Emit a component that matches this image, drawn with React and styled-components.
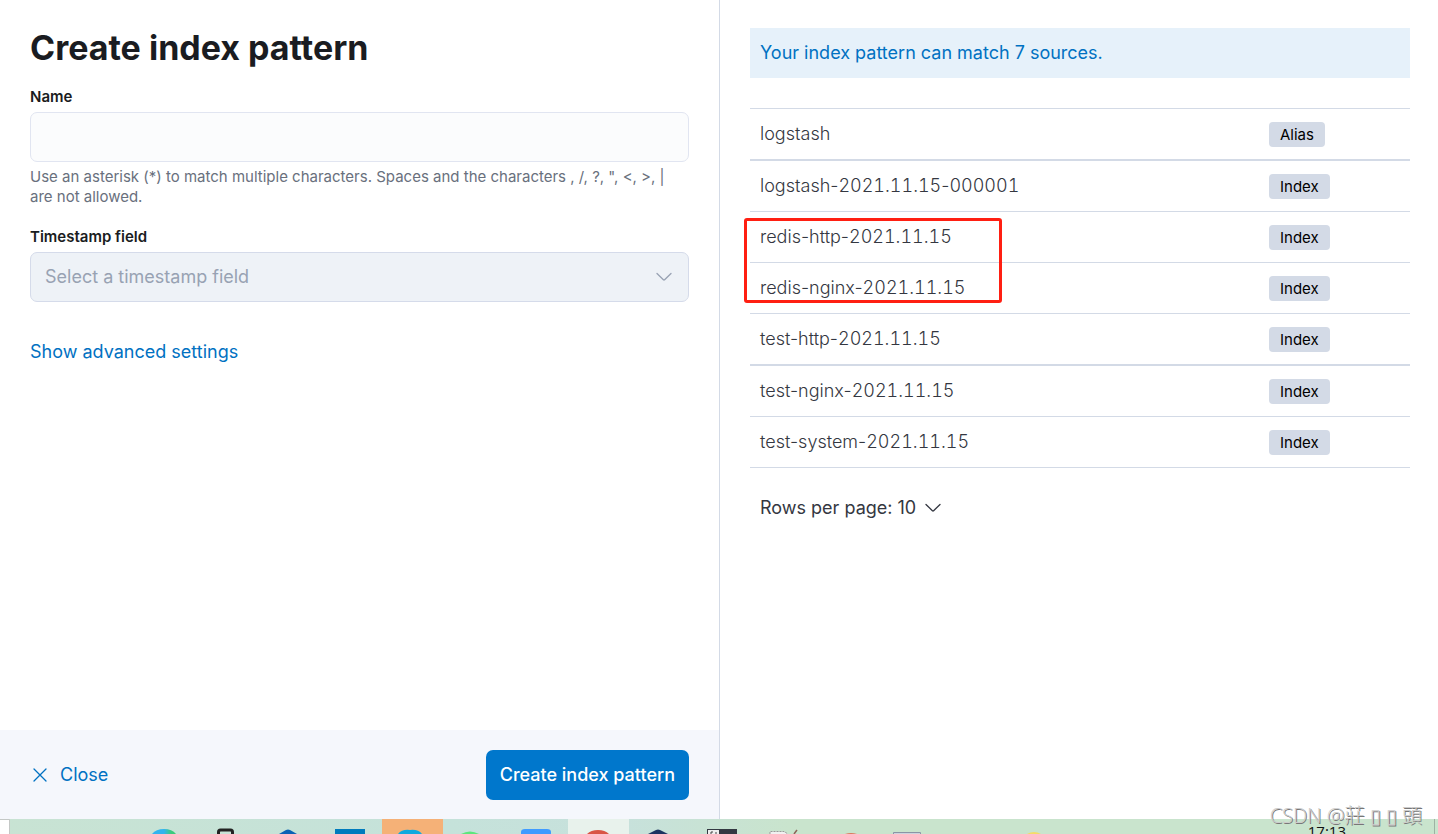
import React from "react";
import styled, { createGlobalStyle } from "styled-components";

const Global = createGlobalStyle`
  * { box-sizing: border-box; }
  body { margin: 0; background: #fff; color: #343741; font: 400 18px/24px Inter, "Liberation Sans", sans-serif; }
  button, input, select { font: inherit; color: inherit; }
`;

const Page = styled.div`
  min-height: 100vh;
  display: flex;
  flex-direction: column;
`;
const Columns = styled.main`
  flex: 1;
  display: grid;
  grid-template-columns: 1fr 1fr;
`;
const FormPanel = styled.form`
  display: flex;
  flex-direction: column;
`;
const FormBody = styled.div`
  flex: 1;
  padding: 28px 30px;
`;
const Title = styled.h1`
  margin: 0 0 19px;
  font-size: 34px;
  line-height: 40px;
  font-weight: 700;
  color: #1a1c21;
`;
const Field = styled.div`
  display: flex;
  flex-direction: column;
  margin-bottom: 20px;
`;
const Label = styled.label`
  margin-bottom: 5px;
  font-size: 15px;
  line-height: 20px;
  font-weight: 600;
  color: #1a1c21;
`;
const TextInput = styled.input`
  height: 50px;
  padding: 0 14px;
  border: 1px solid #e1e5f1;
  border-radius: 7px;
  background: #fbfcfd;
`;
const Help = styled.p`
  margin: 5px 0 0;
  font-size: 15px;
  line-height: 20px;
  color: #69707d;
`;
const SelectWrap = styled.div`
  display: grid;
  align-items: center;
  & > * { grid-area: 1 / 1; }
  & > svg { justify-self: end; margin-right: 16px; pointer-events: none; }
`;
const SelectInput = styled.select`
  height: 50px;
  width: 100%;
  padding: 0 14px;
  border: 1px solid #d5dbea;
  border-radius: 7px;
  background: #eef2f7;
  color: #98a2b3;
  appearance: none;
  opacity: 1;
`;
const TextButton = styled.button`
  display: inline-flex;
  align-items: center;
  gap: ${(p) => p.$gap || 0}px;
  padding: 0;
  border: 0;
  background: none;
  color: ${(p) => p.$color || "#0071c2"};
  cursor: pointer;
`;
const AdvancedRow = styled.div`
  display: flex;
  padding-top: 18px;
`;
const Footer = styled.footer`
  display: flex;
  align-items: center;
  justify-content: space-between;
  padding: 20px 30px 19px;
  background: #f5f7fc;
`;
const PrimaryButton = styled.button`
  height: 50px;
  padding: 0 14px;
  border: 0;
  border-radius: 7px;
  background: #0077cc;
  color: #fff;
  font-weight: 500;
`;
const SourcesPanel = styled.section`
  border-left: 1px solid #d3dae6;
  padding: 28px 28px 28px 30px;
`;
const Callout = styled.p`
  margin: 0 0 30px;
  padding: 13px 10px;
  background: #e6f1fa;
  color: #0071c2;
`;
const TableArea = styled.div`
  position: relative;
`;
const Table = styled.table`
  width: 100%;
  border-top: 1px solid #d3dae6;
  border-spacing: 0;
  table-layout: fixed;
`;
const Cell = styled.td`
  height: 51px;
  padding: 0 10px;
  border-bottom: 1px solid #d3dae6;
  font-weight: 300;
  width: ${(p) => p.$width || "auto"};
  tr:nth-child(4n + 1) > & { height: 52px; border-bottom-width: 2px; }
`;
const Digits = styled.span`
  font-variant-numeric: tabular-nums;
`;
const Badge = styled.span`
  display: inline-block;
  vertical-align: middle;
  margin-top: 1px;
  padding: 0 11px;
  border-radius: 4px;
  background: #d3dae6;
  color: #000;
  font-size: 15px;
  line-height: 25px;
  font-weight: 400;
`;
const Highlight = styled.div`
  position: absolute;
  top: 110px;
  left: -6px;
  width: 258px;
  height: 85px;
  border: 3px solid #ff1f12;
  border-radius: 3px;
  pointer-events: none;
`;
const Pager = styled.div`
  display: flex;
  padding: 28px 10px;
`;
const Taskbar = styled.div`
  position: relative;
  display: flex;
  height: 15px;
  background: linear-gradient(90deg, #c8e3d3, #c5e2da 31%, #c7e1dc 43%, #c9e4cd 55%, #c9e4cd);
`;
const TaskIcons = styled.svg`
  display: block;
  width: 100%;
  height: 15px;
`;
const Clock = styled.time`
  position: absolute;
  right: 92px;
  top: 5px;
  height: 10px;
  overflow: hidden;
  font: 15px/15px "Open Sans", sans-serif;
  color: #111;
`;
const Watermark = styled.div`
  position: absolute;
  right: 16px;
  bottom: 5px;
  font: 300 20px/26px "Open Sans", "Noto Sans CJK TC", sans-serif;
  color: #ccc;
  text-shadow: 1px 1px 0 #777;
  white-space: nowrap;
`;

const Chevron = ({ color }) => (
  <svg width="18" height="18" viewBox="0 0 18 18" fill="none" stroke={color} strokeWidth="1.3" strokeLinecap="round" strokeLinejoin="round" aria-hidden="true">
    <path d="M2 5.5l6.4 6.2q.6.6 1.2 0L16 5.5" />
  </svg>
);
const Cross = () => (
  <svg width="20" height="20" viewBox="0 0 20 20" fill="none" stroke="#0071c2" strokeWidth="1.3" strokeLinecap="round" aria-hidden="true">
    <path d="M4 4l12 12M16 4L4 16" />
  </svg>
);

const SourceName = ({ name }) =>
  name.split(/([\d.]+)/).map((part, i) => (i % 2 ? <Digits key={i}>{part}</Digits> : part));

const sources = [
  ["logstash", "Alias"],
  ["logstash-2021.11.15-000001", "Index"],
  ["redis-http-2021.11.15", "Index"],
  ["redis-nginx-2021.11.15", "Index"],
  ["test-http-2021.11.15", "Index"],
  ["test-nginx-2021.11.15", "Index"],
  ["test-system-2021.11.15", "Index"],
];

export default function App() {
  return (
    <Page>
      <Global />
      <Columns>
        <FormPanel onSubmit={(e) => e.preventDefault()}>
          <FormBody>
            <Title>Create index pattern</Title>
            <Field>
              <Label htmlFor="name">Name</Label>
              <TextInput id="name" type="text" aria-describedby="name-help" />
              <Help id="name-help">
                Use an asterisk (*) to match multiple characters. Spaces and the characters , /, ?, ", &lt;, &gt;, | are not allowed.
              </Help>
            </Field>
            <Field>
              <Label htmlFor="timestamp">Timestamp field</Label>
              <SelectWrap>
                <SelectInput id="timestamp" disabled>
                  <option>Select a timestamp field</option>
                </SelectInput>
                <Chevron color="#98a2b3" />
              </SelectWrap>
            </Field>
            <AdvancedRow>
              <TextButton type="button">Show advanced settings</TextButton>
            </AdvancedRow>
          </FormBody>
          <Footer>
            <TextButton type="button" $gap={10}>
              <Cross />
              Close
            </TextButton>
            <PrimaryButton type="submit">Create index pattern</PrimaryButton>
          </Footer>
        </FormPanel>
        <SourcesPanel>
          <Callout>Your index pattern can match 7 sources.</Callout>
          <TableArea>
            <Table>
              <tbody>
                {sources.map(([name, kind]) => (
                  <tr key={name}>
                    <Cell>
                      <SourceName name={name} />
                    </Cell>
                    <Cell $width="151px">
                      <Badge>{kind}</Badge>
                    </Cell>
                  </tr>
                ))}
              </tbody>
            </Table>
            <Highlight />
          </TableArea>
          <Pager>
            <TextButton type="button" $gap={8} $color="#343741">
              Rows per page: 10
              <Chevron color="#343741" />
            </TextButton>
          </Pager>
        </SourcesPanel>
      </Columns>
      <Taskbar>
        <TaskIcons viewBox="0 819 1438 15" preserveAspectRatio="xMinYMin slice" aria-hidden="true">
          <defs>
            <linearGradient id="edge">
              <stop offset="0.5" stopColor="#32b4ee" />
              <stop offset="0.8" stopColor="#3bcb7c" />
            </linearGradient>
          </defs>
          <path d="M0 819h9v15H0z" fill="#fff" />
          <path d="M0 819.5h9.500V834" fill="none" stroke="#c4c8c6" />
          <path d="M382 819h61v15h-61z" fill="#f5b177" />
          <path d="M568 819h61v15h-61z" fill="#e8f2ec" />
          <path d="M152 834q4-5 12-5t12 5z" fill="url(#edge)" />
          <path d="M218.500 834v-2q0-2 2-2h10q2 0 2 2v2" fill="none" stroke="#222" strokeWidth="3" />
          <path d="M279 834l7-4q2-1 4 0l7 4z" fill="#0a62b5" />
          <path d="M335 829h30v5h-30z" fill="#007bbd" />
          <path d="M398 834q4-5 12-4q8-1 12 4z" fill="#11a9df" />
          <path d="M461 834q9-5 18 0z" fill="#5ce67c" />
          <path d="M521 834v-2q0-3 4-3h22q4 0 4 3v2z" fill="#3f9bff" />
          <path d="M587 834q4-4 11-4t11 4z" fill="#d95445" />
          <path d="M648 834l8-4q2-1 4 0l8 4z" fill="#1d3461" />
          <path d="M707 829h30v5h-30z" fill="#343842" />
          <path d="M708 830h11v4h-11z" fill="#eee" />
          <path d="M711 834v-2h2M716 834v-2" stroke="#444" fill="none" />
          <path d="M770 834v-2.500h14l4 2.500" fill="#f0f0f0" stroke="#999" strokeDasharray="2 1" />
          <path d="M794 834l3-4" stroke="#8d6358" strokeWidth="1.500" />
          <path d="M845 834q6-2 12 0z" fill="#db795d" />
          <path d="M893.500 834v-1.500h27v1.500" fill="#ccd4dd" stroke="#8b94a6" />
          <path d="M1027 834q7-4 14 0z" fill="#f4db68" />
          <path d="M1434.500 819v15" stroke="#9eb2a3" />
        </TaskIcons>
        <Clock>17:13</Clock>
        <Watermark>CSDN @莊 ▯ ▯ 頭</Watermark>
      </Taskbar>
    </Page>
  );
}
